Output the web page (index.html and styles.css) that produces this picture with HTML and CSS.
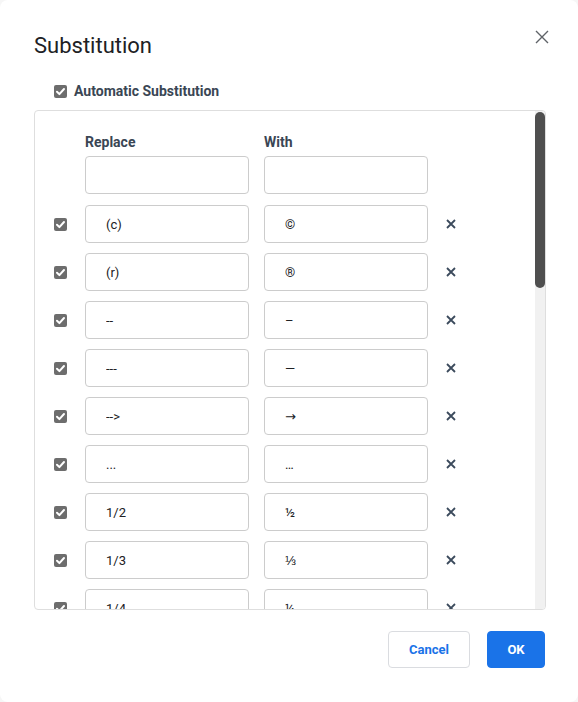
FILE: index.html
```html
<!DOCTYPE html>
<html lang="en">
<head>
<meta charset="utf-8">
<title>Substitution</title>
<link rel="stylesheet" href="styles.css">
</head>
<body>
<div class="dialog">
  <div class="title-bar">
    <h1 class="title">Substitution</h1>
    <button class="close" aria-label="Close">
      <svg width="14" height="14" viewBox="0 0 14 14"><path d="M1 1L13 13M13 1L1 13" stroke="#5f6368" stroke-width="1.4" fill="none"/></svg>
    </button>
  </div>
  <label class="auto">
    <span class="cb"><svg width="13" height="13" viewBox="0 0 13 13"><path d="M3 6.8L5.4 9.1L10 4" stroke="#fff" stroke-width="2" fill="none" stroke-linecap="round" stroke-linejoin="round"/></svg></span>
    <span class="auto-text">Automatic Substitution</span>
  </label>
  <div class="box">
    <div class="list">
      <div class="head">
        <span class="spacer"></span>
        <span class="col">Replace</span>
        <span class="col">With</span>
      </div>
      <div class="row first">
        <span class="spacer"></span>
        <input class="field" type="text" value="">
        <input class="field" type="text" value="">
      </div>
      <div id="rows"></div>
    </div>
    <div class="track"><div class="thumb"></div></div>
  </div>
  <div class="footer">
    <button class="btn cancel">Cancel</button>
    <button class="btn ok">OK</button>
  </div>
</div>
<script>
var data = [["(c)","©"],["(r)","®"],["--","–"],["---","—"],["-->","→",1],["...","…"],["1/2","½"],["1/3","⅓"],["1/4","¼"],["1/5","⅕"],["1/6","⅙"],["1/7","⅐"],["1/8","⅛"],["1/9","⅑"],["2/3","⅔"],["2/5","⅖"],["3/4","¾"],["3/5","⅗"],["3/8","⅜"],["4/5","⅘"],["5/6","⅚"],["5/8","⅝"],["7/8","⅞"],["<--","←",1],["<=","≤"],[">=","≥"],["!=","≠"]];
var html = "";
var chk = '<span class="cb"><svg width="13" height="13" viewBox="0 0 13 13"><path d="M3 6.8L5.4 9.1L10 4" stroke="#fff" stroke-width="2" fill="none" stroke-linecap="round" stroke-linejoin="round"/></svg></span>';
var del = '<span class="del"><svg width="10" height="10" viewBox="0 0 10 10"><path d="M1 1L9 9M9 1L1 9" stroke="#3b4a5c" stroke-width="1.8" fill="none"/></svg></span>';
function esc(s){return s.replace(/&/g,"&amp;").replace(/</g,"&lt;").replace(/>/g,"&gt;").replace(/"/g,"&quot;");}
for (var i = 0; i < data.length; i++) {
  html += '<div class="row">' + chk + '<input class="field" type="text" value="' + esc(data[i][0]) + '"><input class="field' + (data[i][2] ? ' arrow' : '') + '" type="text" value="' + esc(data[i][1]) + '">' + del + '</div>';
}
document.getElementById("rows").innerHTML = html;
</script>
</body>
</html>
```

FILE: styles.css
```css
html, body {
  margin: 0;
  padding: 0;
  background: #f6f6f6;
}
body {
  font-family: Roboto, "Liberation Sans", Arial, sans-serif;
}
.dialog {
  width: 578px;
  height: 702px;
  box-sizing: border-box;
  background: #fff;
  border-radius: 8px;
  padding: 32px 0 0 34px;
}
.title-bar {
  display: flex;
  align-items: flex-start;
  justify-content: space-between;
  padding-right: 29px;
}
.title {
  margin: 0;
  font-size: 22px;
  line-height: 28px;
  font-weight: 400;
  color: #202124;
}
.close {
  border: 0;
  background: none;
  padding: 0;
  margin-top: -2px;
  width: 14px;
  height: 14px;
  display: block;
}
.close svg { display: block; }
.auto {
  display: flex;
  align-items: center;
  margin: 23px 0 0 20px;
  height: 17px;
}
.cb {
  width: 13px;
  height: 13px;
  background: #6d6d6d;
  border-radius: 2px;
  flex: none;
  display: block;
}
.cb svg { display: block; }
.auto-text {
  margin-left: 7px;
  font-size: 14px;
  line-height: 17px;
  font-weight: 700;
  color: #3a4654;
}
.box {
  margin-top: 10px;
  width: 512px;
  height: 500px;
  box-sizing: border-box;
  border: 1px solid #dedede;
  border-radius: 4px;
  display: flex;
  overflow: hidden;
}
.list {
  flex: 1;
  overflow: hidden;
  padding: 23px 0 0 19px;
}
.track {
  width: 10px;
  flex: none;
  background: #f1f1f1;
  padding-top: 1px;
}
.thumb {
  height: 176px;
  background: #4f4f4f;
  border-radius: 5px;
}
.head {
  display: flex;
  height: 17px;
  margin-bottom: 5px;
}
.head .col {
  width: 164px;
  margin-right: 15px;
  font-size: 14px;
  line-height: 17px;
  font-weight: 700;
  color: #3a4654;
}
.spacer {
  width: 13px;
  flex: none;
}
.row {
  display: flex;
  align-items: center;
  margin-top: 10px;
}
.row.first {
  margin-top: 0;
  margin-bottom: 11px;
}
#rows .row:first-child { margin-top: 0; }
.row .cb, .row .spacer { margin-right: 18px; }
.head .spacer { margin-right: 18px; }
.field {
  width: 164px;
  height: 38px;
  box-sizing: border-box;
  border: 1px solid #cccccc;
  border-radius: 4px;
  padding: 0 8px 0 20px;
  margin: 0 15px 0 0;
  font-family: Roboto, "Liberation Sans", Arial, sans-serif;
  font-size: 13px;
  color: #202124;
  background: #fff;
  outline: none;
  flex: none;
}
.field.arrow {
  font-family: "DejaVu Sans", sans-serif;
  font-size: 13px;
}
.del {
  margin-left: 3px;
  width: 10px;
  height: 10px;
  display: block;
}
.del svg { display: block; }
.footer {
  display: flex;
  justify-content: flex-end;
  gap: 17px;
  margin-top: 21px;
  padding-right: 33px;
}
.btn {
  height: 37px;
  border-radius: 4px;
  font-family: Roboto, "Liberation Sans", Arial, sans-serif;
  font-size: 13px;
  font-weight: 700;
  padding: 0;
  box-sizing: border-box;
}
.cancel {
  width: 82px;
  background: #fff;
  border: 1px solid #dadce0;
  color: #1a73e8;
}
.ok {
  width: 58px;
  background: #1a73e8;
  border: 1px solid #1a73e8;
  color: #fff;
}
```
